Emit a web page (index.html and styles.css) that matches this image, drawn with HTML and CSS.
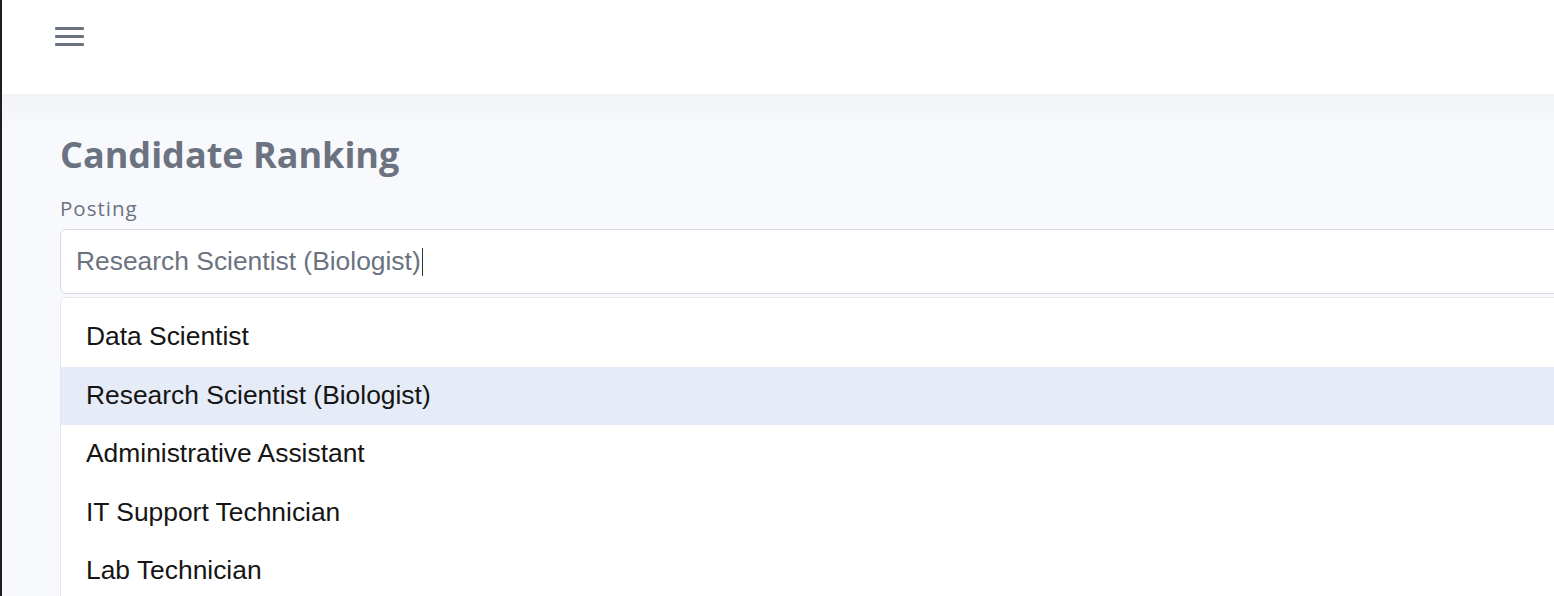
FILE: index.html
```html
<!DOCTYPE html>
<html lang="en">
<head>
<meta charset="UTF-8" />
<meta name="viewport" content="width=device-width, initial-scale=1" />
<title>Candidate Ranking</title>
<link rel="stylesheet" href="styles.css">
</head>
<body>
  <header class="topbar">
    <button class="menu-btn" aria-label="Menu">
      <span></span><span></span><span></span>
    </button>
  </header>

  <main class="content">
    <h1 class="page-title">Candidate Ranking</h1>
    <div class="field">
      <label for="posting">Posting</label>
      <div class="combo">
        <div class="combo-input" id="posting">Research Scientist (Biologist)<span class="caret"></span></div>
        <ul class="combo-list">
          <li>Data Scientist</li>
          <li class="active">Research Scientist (Biologist)</li>
          <li>Administrative Assistant</li>
          <li>IT Support Technician</li>
          <li>Lab Technician</li>
        </ul>
      </div>
    </div>
  </main>
</body>
</html>
```

FILE: styles.css
```css
html, body {
  margin: 0;
  height: 100%;
}
body {
  font-family: 'Open Sans', sans-serif;
  background: #f8f9fc;
  border-left: 2px solid #1e1e1e;
  overflow: hidden;
  color: #333;
}
.topbar {
  height: 94px;
  background: #fff;
  box-sizing: border-box;
  padding: 27px 0 0 53px;
}
.menu-btn {
  display: flex;
  flex-direction: column;
  gap: 5px;
  width: 29px;
  padding: 0;
  border: none;
  background: none;
  cursor: pointer;
}
.menu-btn span {
  display: block;
  height: 3px;
  width: 29px;
  border-radius: 1px;
  background: #6b7280;
}
.content {
  background: linear-gradient(#f3f4f7 0, #f8f9fc 40px);
  padding: 39px 0 0 58px;
  width: 1700px;
  height: 600px;
}
.page-title {
  margin: 0 0 18px;
  font-size: 36px;
  font-weight: 700;
  color: #6b7280;
  line-height: 44px;
}
.field label {
  display: block;
  font-size: 20.5px;
  letter-spacing: 1px;
  color: #6b7280;
  line-height: 26px;
  margin-bottom: 8px;
}
.combo-input {
  background: #fff;
  border: 1px solid #d7dae0;
  border-radius: 6px;
  height: 65px;
  box-sizing: border-box;
  padding: 0 15px;
  display: flex;
  align-items: center;
  font-family: 'Liberation Sans', Arial, sans-serif;
  font-size: 26.4px;
  color: #6b7280;
}
.caret {
  display: inline-block;
  width: 1.5px;
  height: 28px;
  background: #333;
  margin-left: 1px;
}
.combo-list {
  list-style: none;
  margin: 3px 0 0;
  padding: 10px 0 0;
  background: #fff;
  border: 1px solid #e5e7eb;
  border-radius: 6px;
  font-family: 'Liberation Sans', Arial, sans-serif;
  font-size: 26.4px;
  color: #151515;
}
.combo-list li {
  height: 58.5px;
  line-height: 57px;
  padding-left: 25px;
}
.combo-list li.active {
  background: #e5ebf7;
}
```
